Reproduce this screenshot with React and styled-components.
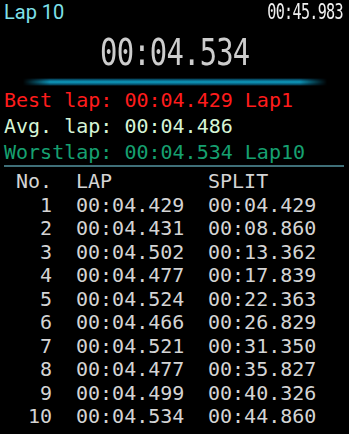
import React from 'react'
import styled, { createGlobalStyle } from 'styled-components'

const MONO = '"DejaVu Sans Mono", "Liberation Mono", monospace'

const GlobalStyle = createGlobalStyle`
  html, body {
    margin: 0;
    padding: 0;
    background: #000;
  }
  body {
    width: 349px;
    height: 434px;
    overflow: hidden;
  }
`

const Screen = styled.div`
  width: 349px;
  height: 434px;
  background: #000;
  display: flex;
  flex-direction: column;
  overflow: hidden;
`

const TopBar = styled.div`
  display: flex;
  justify-content: space-between;
  align-items: center;
  height: 24px;
  padding: 0 6px 0 4px;
`

const LapTitle = styled.div`
  font-family: Roboto, "Noto Sans", sans-serif;
  font-size: 20px;
  line-height: 24px;
  color: #7fe1ea;
`

const Segment = styled.div`
  font-family: ${MONO};
  font-size: ${(p) => p.size}px;
  line-height: ${(p) => p.lh}px;
  color: ${(p) => p.color};
  transform: scaleX(${(p) => p.squeeze});
  transform-origin: ${(p) => p.origin};
  white-space: nowrap;
  letter-spacing: -1px;
`

const BigClockRow = styled.div`
  display: flex;
  justify-content: center;
  margin-top: 10px;
  height: 38px;
  align-items: center;
`

const Glow = styled.div`
  margin: 6px auto 0;
  width: 304px;
  height: 8px;
  background: linear-gradient(
    180deg,
    rgba(0, 0, 0, 0) 0%,
    #06526e 20%,
    #0e9cbf 50%,
    #06526e 80%,
    rgba(0, 0, 0, 0) 100%
  );
  -webkit-mask-image: linear-gradient(90deg, transparent 0%, #000 9%, #000 91%, transparent 100%);
  mask-image: linear-gradient(90deg, transparent 0%, #000 9%, #000 91%, transparent 100%);
`

const Stats = styled.div`
  padding: 1px 0 0 4px;
  font-family: ${MONO};
  font-size: 20px;
  line-height: 26px;
  white-space: pre;
`

const StatLine = styled.div`
  color: ${(p) => p.color};
`

const Divider = styled.div`
  margin: 0 5px 0 4px;
  height: 2px;
  background: #3f6f78;
`

const Table = styled.div`
  display: grid;
  grid-template-columns: 48px 108px 108px;
  column-gap: 24px;
  padding: 3px 0 0 4px;
  font-family: ${MONO};
  font-size: 20px;
  line-height: 23.5px;
  color: #d4d4d4;
`

const Cell = styled.div`
  text-align: ${(p) => (p.right ? 'right' : 'left')};
  white-space: pre;
`

const laps = [
  ['00:04.429', '00:04.429'],
  ['00:04.431', '00:08.860'],
  ['00:04.502', '00:13.362'],
  ['00:04.477', '00:17.839'],
  ['00:04.524', '00:22.363'],
  ['00:04.466', '00:26.829'],
  ['00:04.521', '00:31.350'],
  ['00:04.477', '00:35.827'],
  ['00:04.499', '00:40.326'],
  ['00:04.534', '00:44.860'],
]

const App = () => {
  return (
    <Screen>
      <GlobalStyle />
      <TopBar>
        <LapTitle>Lap 10</LapTitle>
        <Segment size={21} lh={24} color="#f0f0f0" squeeze={0.72} origin="right center">
          00:45.983
        </Segment>
      </TopBar>
      <BigClockRow>
        <Segment size={37} lh={38} color="#cdcdcd" squeeze={0.78} origin="center center">
          00:04.534
        </Segment>
      </BigClockRow>
      <Glow />
      <Stats>
        <StatLine color="#ff1c1c">Best lap: 00:04.429 Lap1</StatLine>
        <StatLine color="#d6f5d6">Avg. lap: 00:04.486</StatLine>
        <StatLine color="#16a070">Worstlap: 00:04.534 Lap10</StatLine>
      </Stats>
      <Divider />
      <Table>
        <Cell right>No.</Cell>
        <Cell>LAP</Cell>
        <Cell>SPLIT</Cell>
        {laps.map(([lap, split], i) => (
          <React.Fragment key={i}>
            <Cell right>{i + 1}</Cell>
            <Cell>{lap}</Cell>
            <Cell>{split}</Cell>
          </React.Fragment>
        ))}
      </Table>
    </Screen>
  )
}

export default App
